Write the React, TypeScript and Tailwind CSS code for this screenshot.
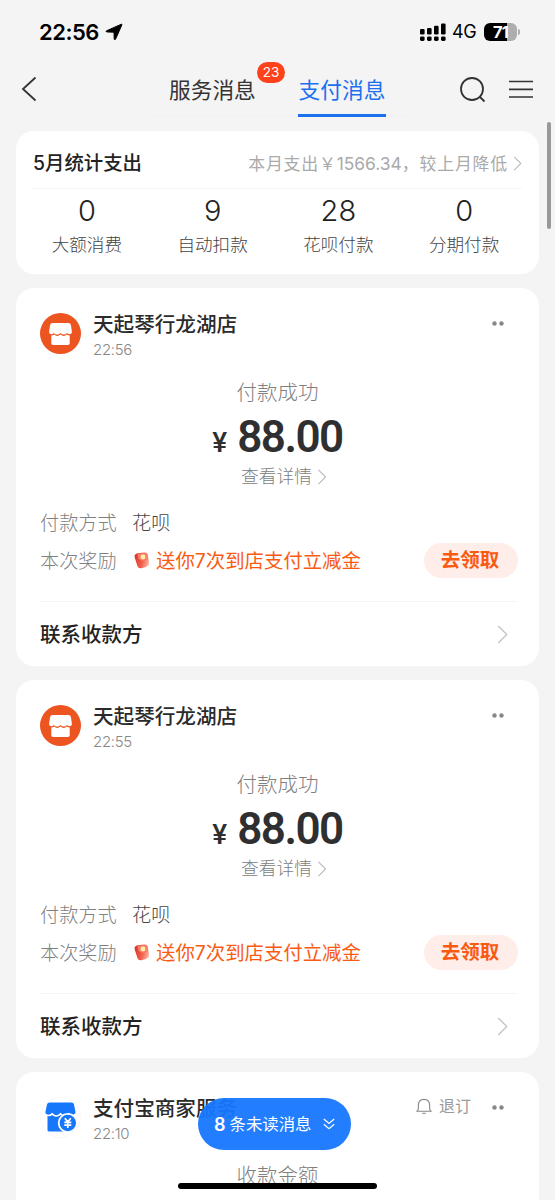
import type { ReactNode } from "react";
import clsx from "clsx";

const stats = [
  { value: "0", label: "大额消费" },
  { value: "9", label: "自动扣款" },
  { value: "28", label: "花呗付款" },
  { value: "0", label: "分期付款" },
];

const payments = [
  { shop: "天起琴行龙湖店", time: "22:56", amount: "88.00" },
  { shop: "天起琴行龙湖店", time: "22:55", amount: "88.00" },
];

function Chevron({ className }: { className?: string }) {
  return (
    <svg viewBox="0 0 10 18" fill="none" stroke="currentColor" className={className}>
      <path d="M1 1l8 8-8 8" strokeWidth="1.3" />
    </svg>
  );
}

function StatusBar() {
  return (
    <div className="flex h-16 items-center justify-between pl-[39px] pr-[35px]">
      <div className="flex items-center gap-[6px]">
        <span className="text-[22px] leading-8 font-semibold tracking-[-0.5px] text-black">
          22:56
        </span>
        <svg viewBox="0 0 18 18" className="size-[18px]">
          <path
            d="M16.4 1.2L1.3 7.9Q.9 8.6 1.5 8.9L9 9.200 9.200 16.300Q9.800 17 10.500 16.300L16.900 1.800Q17 1 16.400 1.200z"
            fill="#000"
            stroke="#000"
            strokeWidth="1"
            strokeLinejoin="round"
          />
        </svg>
      </div>
      <div className="flex items-center">
        <svg viewBox="0 0 26 19" className="h-[19px] w-[26px]">
          <rect x="0" y="6" width="4.6" height="5.4" rx="1.2" />
          <rect x="7" y="5" width="4.6" height="6.4" rx="1.2" />
          <rect x="14" y="2.7" width="4.6" height="8.7" rx="1.2" />
          <rect x="21" y="0.6" width="4.6" height="10.8" rx="1.2" />
          <rect x="0" y="13.4" width="4.6" height="4.6" rx="1.4" />
          <rect x="7" y="13.4" width="4.6" height="4.6" rx="1.4" />
          <rect x="14" y="13.4" width="4.6" height="4.6" rx="1.4" />
          <rect x="21" y="13.4" width="4.6" height="4.6" rx="1.4" />
        </svg>
        <span className="ml-[6px] w-[26px] text-[18px] leading-8 tracking-[-0.5px] text-black">
          4G
        </span>
        <div className="ml-[6px] flex h-[18px] w-[33px] items-center justify-center overflow-hidden rounded-[6px] bg-linear-to-r from-black from-70% to-[#aeaeae] to-70% text-[16.5px] font-bold tracking-[-0.8px] text-white">
          71
        </div>
        <div className="ml-[1px] h-[6px] w-[2px] rounded-r-full bg-[#aeaeae]" />
      </div>
    </div>
  );
}

function NavBar() {
  return (
    <nav className="flex h-[53px] pl-[21px] pr-[21px]">
      <svg
        viewBox="0 0 16 26"
        fill="none"
        stroke="#333"
        strokeWidth="1.8"
        className="mt-[12px] h-[26px] w-[16px]"
      >
        <path d="M14.5 1.5L2 13l12.5 11.5" />
      </svg>
      <div className="ml-[111px] flex w-[259px] border-b border-[#f0f0f0] pl-[21px] text-[21.7px] leading-[52px]">
        <div className="relative w-[88px] text-[#333]">
          服务消息
          <span className="absolute top-[-2px] left-[88px] flex h-[21px] w-7 items-center justify-center rounded-full bg-[#ff411c] text-[13.5px] leading-none text-white">
            23
          </span>
        </div>
        <div className="-mb-px ml-[41px] h-[53px] w-[88px] border-b-3 border-[#1c6fed] text-center text-[#1c70f0]">
          支付消息
        </div>
      </div>
      <svg
        viewBox="0 0 27 27"
        fill="none"
        stroke="#333"
        strokeWidth="1.8"
        className="mt-[12px] ml-[52px] size-[27px]"
      >
        <circle cx="13" cy="13" r="11" />
        <path d="M20.5 20.5l5 5" />
      </svg>
      <svg
        viewBox="0 0 24 18"
        stroke="#333"
        strokeWidth="1.7"
        className="mt-[16px] ml-[23px] h-[18px] w-[24px]"
      >
        <path d="M0 1.5h24M0 9.3h24M0 17h24" />
      </svg>
    </nav>
  );
}

function StatsCard() {
  return (
    <section className="h-[143px] rounded-[18px] bg-white px-[17px]">
      <div className="flex h-[58px] items-center justify-between border-b border-[#f5f5f5] pt-[8px]">
        <h2 className="text-[19.4px] font-medium text-[#222]">5月统计支出</h2>
        <div className="flex items-center text-[#aaa]">
          <span className="text-[16.9px] leading-6 tracking-[0.8px] whitespace-nowrap">
            本月支出￥<span className="text-[17.4px] tracking-normal">1566.34</span>，较上月降低
          </span>
          <Chevron className="ml-[5px] h-[15px] w-[9px] text-[#bbb]" />
        </div>
      </div>
      <div className="-mr-[5px] -ml-[9px] grid grid-cols-4 text-center">
        {stats.map((s) => (
          <div key={s.label}>
            <div className="mt-[4px] text-[29px] leading-9 font-light text-[#222]">{s.value}</div>
            <div className="mt-[2px] text-[17.6px] leading-7 font-light text-[#444]">{s.label}</div>
          </div>
        ))}
      </div>
    </section>
  );
}

function ShopIcon() {
  return (
    <svg viewBox="0 0 41 41" className="size-[41px] shrink-0">
      <circle cx="20.5" cy="20.5" r="20.5" fill="#ec5420" />
      <path
        d="M12.500 10h16q2 0 2.400 2l1 6.500q0 2.800-2.200 2.800-1.400 0-2.600-1.300-1.200 1.600-3.200 1.600t-3.400-1.600q-1.400 1.600-3.400 1.600t-3.200-1.600q-1.200 1.300-2.600 1.300-2.300 0-2.200-2.800l1-6.500q.4-2 2.400-2z"
        fill="#fff"
      />
      <path
        d="M11.300 22.600q1.500 0 2.800-1 1.400 1.400 3.100 1.400t3.300-1.400q1.500 1.400 3.300 1.400t3.100-1.400q1.200 1 2.800 1v7.700q0 1.800-1.800 1.800H13.100q-1.800 0-1.800-1.800z"
        fill="#fff"
      />
    </svg>
  );
}

function MerchantIcon() {
  return (
    <svg viewBox="0 0 41 41" className="size-[41px] shrink-0">
      <circle cx="20.5" cy="20.5" r="20" fill="#fff" stroke="#f8f8f8" />
      <path
        d="M9.500 5.500h22q2 0 2.500 2l1.500 7.500q0 3-3 3-2 0-3.500-1.600Q27.300 18.500 25 18.500t-4.500-2.100q-2 2.100-4.300 2.100T12 16.400Q10.500 18 8.400 18q-3.200 0-3-3L7 7.500q.5-2 2.500-2z"
        fill="#1777fb"
      />
      <path d="M7.500 16h25.500v18.500h-24q-1.500 0-1.500-1.500z" fill="#1777fb" />
      <path
        d="M5.500 17.300q1.200 1.200 3 1.200 2.100 0 3.600-1.600 2 2.100 4.200 2.100t4.200-2.100q2.200 2.100 4.500 2.100t4-2.100q1.500 1.600 3.500 1.600 1.800 0 2.800-1.200"
        fill="none"
        stroke="#fff"
        strokeWidth="1.6"
      />
      <circle cx="27.8" cy="26" r="10" fill="#fff" />
      <circle cx="27.8" cy="26" r="8.2" fill="#1777fb" />
      <path
        d="M24.8 21.3l3 3.600 3-3.600M27.8 24.900v6M24.3 25.400h7M24.3 28.100h7"
        fill="none"
        stroke="#fff"
        strokeWidth="1.7"
      />
    </svg>
  );
}

type CardHeaderProps = {
  icon: ReactNode;
  title: string;
  time: string;
  unsubscribe?: boolean;
};

function CardHeader({ icon, title, time, unsubscribe }: CardHeaderProps) {
  return (
    <header className="flex pt-[21px]">
      <div className="mt-[4px]">{icon}</div>
      <div className="ml-[12px] flex-1">
        <h3 className="pt-px text-[20.6px] leading-[30px] font-medium text-[#2b2b2b]">{title}</h3>
        <p className="text-[15px] leading-5 font-light tracking-[-0.3px] text-[#888]">{time}</p>
      </div>
      <div className="flex h-[29px] items-center pr-[11px] text-[#888]">
        {unsubscribe && (
          <div className="mr-[21px] flex items-center gap-[7px] text-[16px] text-[#999]">
            <svg
              viewBox="0 0 16 17"
              fill="none"
              stroke="#888"
              strokeWidth="1.1"
              className="-mt-[3px] h-[17px] w-4"
            >
              <path d="M1 13.300h14q-1.400-1.500-1.400-3.500V7q-.2-5.600-5.600-5.600T2.400 7v2.800q0 2-1.400 3.500zM6.200 15.200h3.600" />
            </svg>
            <span className="-mt-[3px]">退订</span>
          </div>
        )}
        <svg viewBox="0 0 12 5" fill="currentColor" className="h-[5px] w-3">
          <circle cx="2.5" cy="2.5" r="2.2" />
          <circle cx="9.5" cy="2.5" r="2.2" />
        </svg>
      </div>
    </header>
  );
}

function RedPacket() {
  return (
    <svg viewBox="0 0 16 17" className="-mt-[2px] h-[17px] w-4">
      <defs>
        <linearGradient id="packet" x1="0" y1="0.2" x2="1" y2="0.5">
          <stop offset="0" stopColor="#d9352b" />
          <stop offset="0.6" stopColor="#f4604b" />
          <stop offset="1" stopColor="#fbb09c" />
        </linearGradient>
      </defs>
      <path
        d="M3.500 1.300L10.500.6q2.800 0 3.300 2l1.300 8.200q0 3.200-2 3.700l-5.500 1.700q-3 .3-4-1.800L.6 5.200q-.3-3.500 2.900-3.900z"
        fill="url(#packet)"
      />
      <path d="M3.500 1.800l7-.8q2.700.2 3 2l.6 4.700Q8.500 10 4.500 7z" fill="#f7826c" />
      <circle cx="9" cy="5" r="2.4" fill="#fff0a8" />
    </svg>
  );
}

function PaymentCard({ shop, time, amount }: (typeof payments)[number]) {
  return (
    <section className="h-[378px] rounded-[18px] bg-white px-6">
      <CardHeader icon={<ShopIcon />} title={shop} time={time} />
      <div className="flex flex-col items-center">
        <div className="mt-[18px] text-[20.5px] leading-[30px] font-light text-[#808080]">付款成功</div>
        <div className="mt-[6px] mb-[2px] flex h-[46px] items-baseline font-[Roboto,sans-serif] text-[#2f2f31]">
          <span className="text-[28px] leading-[46px] font-medium">¥</span>
          <span className="ml-[10px] text-[44px] leading-[46px] font-semibold tracking-[-1.5px]">
            {amount}
          </span>
        </div>
        <div className="flex items-center pl-[13px] text-[17.7px] leading-[30px] font-light text-[#808080]">
          查看详情
          <Chevron className="ml-[5px] h-[16px] w-[10px] text-[#bbb]" />
        </div>
      </div>
      <div className="mt-[13px] flex h-[36px] items-center text-[19.2px] font-light">
        <span className="w-[92px] text-[#808080]">付款方式</span>
        <span className="text-[#444]">花呗</span>
      </div>
      <div className="mt-[2px] -mr-[3px] flex h-[36px] items-center text-[19.2px]">
        <span className="w-[94px] font-light text-[#808080]">本次奖励</span>
        <RedPacket />
        <span className="ml-[6px] flex-1 pt-px text-[19.4px] text-[#fa5b14]">
          送你7次到店支付立减金
        </span>
        <button className="-mt-[2px] h-[35px] w-[94px] rounded-full bg-[#feede8] pt-px pr-[2px] text-[19.5px] font-semibold text-[#f95a12]">
          去领取
        </button>
      </div>
      <div className="mt-[22px] -mr-[3px] flex h-[66px] items-center justify-between border-t border-[#f5f5f5] pr-[10px]">
        <span className="pt-px text-[20.5px] font-medium text-[#222]">联系收款方</span>
        <Chevron className="h-[19px] w-[11px] text-[#c4c4c4]" />
      </div>
    </section>
  );
}

export default function App() {
  return (
    <div
      className={clsx(
        "relative h-[1200px] w-[555px] overflow-hidden bg-[#f4f4f4]",
        "font-[Inter,'Noto_Sans_CJK_SC',sans-serif]",
      )}
    >
      <StatusBar />
      <NavBar />
      <main className="mt-[14px] flex flex-col gap-[14px] px-4">
        <StatsCard />
        {payments.map((p) => (
          <PaymentCard key={p.time} {...p} />
        ))}
        <section className="h-[378px] rounded-[18px] bg-white px-6">
          <CardHeader icon={<MerchantIcon />} title="支付宝商家服务" time="22:10" unsubscribe />
          <div className="mt-[17px] text-center text-[20.5px] leading-[30px] font-light text-[#808080]">
            收款金额
          </div>
        </section>
      </main>

      {/* scrollbar thumb */}
      <div className="absolute top-[122px] right-[4px] h-[107px] w-[4px] rounded-full bg-[#999]" />

      {/* unread messages pill */}
      <button className="absolute top-[1098px] left-[198px] flex h-[52px] w-[153px] items-center rounded-full bg-[#1677ff]/95 pl-[16px] text-[16.4px] text-white">
        <span className="mr-[4px] text-[18px] font-semibold">8</span>
        <span className="pt-px">条未读消息</span>
        <svg
          viewBox="0 0 12 12"
          fill="none"
          stroke="currentColor"
          strokeWidth="1.2"
          className="ml-[12px] size-3"
        >
          <path d="M.8 1l5.200 4.500L11.200 1M.8 6.200L6 10.700l5.200-4.500" />
        </svg>
      </button>

      {/* home indicator */}
      <div className="absolute top-[1183px] left-[178px] h-[6px] w-[199px] rounded-full bg-black" />
    </div>
  );
}
